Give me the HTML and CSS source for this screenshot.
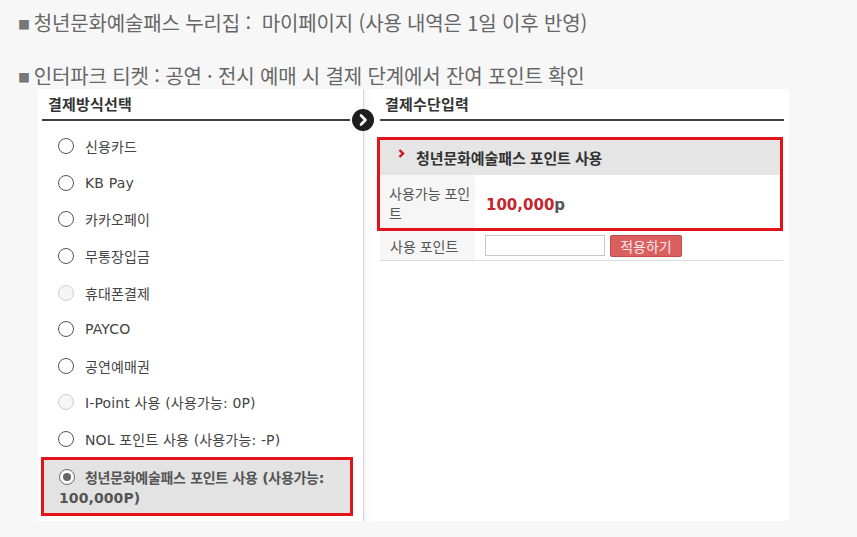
FILE: index.html
```html
<!DOCTYPE html>
<html lang="ko">
<head>
<meta charset="utf-8">
<link rel="stylesheet" href="styles.css">
</head>
<body>
<p class="intro intro-first"><span class="sq">■</span>청년문화예술패스 누리집 :&nbsp; 마이페이지 (사용 내역은 1일 이후 반영)</p>
<p class="intro intro-second"><span class="sq">■</span>인터파크 티켓 : 공연 · 전시 예매 시 결제 단계에서 잔여 포인트 확인</p>
<div class="panel">
  <div class="col-left">
    <h3 class="col-title">결제방식선택</h3>
    <ul class="methods">
      <li class="method"><span class="radio"></span>신용카드</li>
      <li class="method"><span class="radio"></span>KB Pay</li>
      <li class="method"><span class="radio"></span>카카오페이</li>
      <li class="method"><span class="radio"></span>무통장입금</li>
      <li class="method"><span class="radio radio-disabled"></span>휴대폰결제</li>
      <li class="method"><span class="radio"></span>PAYCO</li>
      <li class="method"><span class="radio"></span>공연예매권</li>
      <li class="method"><span class="radio radio-disabled"></span>I-Point 사용 (사용가능: 0P)</li>
      <li class="method"><span class="radio"></span>NOL 포인트 사용 (사용가능: -P)</li>
    </ul>
    <div class="selected-method"><span class="radio radio-checked"></span>청년문화예술패스 포인트 사용 (사용가능: <span class="sel-num">100,000P)</span></div>
  </div>
  <div class="col-right">
    <span class="arrow-badge"><svg width="22" height="22" viewBox="0 0 22 22"><circle cx="11" cy="11" r="11" fill="#1e1e1e"/><path d="M9 6.5 L13.5 11 L9 15.5" fill="none" stroke="#fff" stroke-width="2.6" stroke-linecap="round" stroke-linejoin="round"/></svg></span>
    <h3 class="col-title col-title-right">결제수단입력</h3>
    <div class="pass-box">
      <div class="pass-head"><svg class="chev" width="7" height="9" viewBox="0 0 7 9"><path d="M1.5 1 L5 4.5 L1.5 8" fill="none" stroke="#d0141c" stroke-width="2.4"/></svg>청년문화예술패스 포인트 사용</div>
      <div class="pass-row">
        <div class="row-label row-label-wrap">사용가능 포인트</div>
        <div class="row-value"><span class="amount">100,000</span><span class="unit">p</span></div>
      </div>
    </div>
    <div class="use-row">
      <div class="row-label">사용 포인트</div>
      <div class="row-value row-input">
        <input class="point-input" type="text">
        <button class="apply-btn" type="button">적용하기</button>
      </div>
    </div>
  </div>
</div>
</body>
</html>
```

FILE: styles.css
```css
* { box-sizing: border-box; }
html, body { margin: 0; padding: 0; }
body {
  background: #f7f7f7;
  font-family: "Noto Sans CJK KR", "Noto Sans", sans-serif;
  color: #444;
  width: 857px;
  height: 537px;
  overflow: hidden;
}
.intro {
  margin: 0;
  padding-left: 18px;
  height: 26px;
  box-sizing: content-box;
  font-size: 20px;
  line-height: 26px;
  color: #666;
  letter-spacing: -0.15px;
  white-space: nowrap;
  overflow: hidden;
}
.intro-first { padding-top: 10px; }
.intro-second { padding-top: 27px; }
.sq {
  font-size: 12px;
  line-height: 10px;
  color: #777;
  margin-right: 4px;
  vertical-align: 1px;
}
.panel {
  margin: 0 0 0 38px;
  width: 751px;
  height: 432px;
  background: #fff;
  display: grid;
  grid-template-columns: 325px 426px;
}
.col-left { padding: 0 13px 0 4px; }
.col-right {
  position: relative;
  border-left: 1px solid #d4d4d4;
  box-shadow: inset 6px 0 6px -4px rgba(0,0,0,0.06);
  padding: 0 5px 0 16px;
}
.col-title {
  margin: 0;
  height: 32px;
  padding: 6px 0 0 6px;
  font-size: 15px;
  line-height: 18px;
  font-weight: bold;
  color: #333;
  border-bottom: 2px solid #404040;
  letter-spacing: 0.2px;
}
.col-title-right { padding-left: 5px; }
.arrow-badge {
  position: absolute;
  left: -12px;
  top: 20px;
  width: 22px;
  height: 22px;
}
.arrow-badge svg { display: block; }
.methods {
  list-style: none;
  margin: 0;
  padding: 7px 0 0 0;
}
.method {
  height: 36.6px;
  display: flex;
  align-items: center;
  font-family: "DejaVu Sans", "Noto Sans CJK KR", sans-serif;
  font-size: 14px;
  color: #444;
  padding-left: 16px;
  letter-spacing: 0.15px;
}
.radio {
  display: inline-block;
  flex: none;
  width: 16px;
  height: 16px;
  border: 1.5px solid #555;
  border-radius: 50%;
  background: #fff;
  margin-right: 11px;
  position: relative;
}
.radio-disabled {
  border-color: #cfcfcf;
  background: #f6f6f6;
}
.radio-checked {
  border-color: #6a6a6a;
  vertical-align: -2px;
  margin-right: 10px;
}
.radio-checked::after {
  content: "";
  position: absolute;
  left: 2.5px;
  top: 2.5px;
  width: 8px;
  height: 8px;
  border-radius: 50%;
  background: #666;
}
.selected-method {
  margin-left: -1px;
  margin-right: -3px;
  border: 3px solid #e3131b;
  background: #e3e3e3;
  padding: 8px 6px 5px 15px;
  font-family: "DejaVu Sans", "Noto Sans CJK KR", sans-serif;
  font-size: 14px;
  line-height: 20px;
  font-weight: bold;
  color: #555;
  letter-spacing: -0.3px;
}
.sel-num { letter-spacing: 0.1px; }
.pass-box {
  margin: 16px 0 0 -3px;
  width: 406px;
  border: 3px solid #e3131b;
}
.pass-head {
  height: 35px;
  background: #e5e5e5;
  display: flex;
  align-items: center;
  padding-left: 18px;
  font-size: 15px;
  font-weight: bold;
  color: #333;
  letter-spacing: -0.1px;
}
.chev { margin-right: 11px; margin-top: -9px; }
.pass-row {
  display: flex;
  height: 53px;
}
.row-label {
  width: 95px;
  flex: none;
  background: #f6f6f6;
  font-size: 14px;
  color: #555;
  padding-left: 9px;
  display: flex;
  align-items: center;
}
.row-label-wrap {
  line-height: 20px;
  word-break: break-all;
  padding-right: 4px;
  padding-top: 2px;
}
.row-value {
  display: flex;
  align-items: center;
  padding-left: 11px;
  padding-top: 6px;
}
.amount {
  font-family: "DejaVu Sans", "Noto Sans", sans-serif;
  font-weight: bold;
  font-size: 15px;
  color: #c4262d;
}
.unit {
  font-family: "DejaVu Sans", "Noto Sans", sans-serif;
  font-weight: bold;
  font-size: 15px;
  color: #555;
}
.use-row {
  display: flex;
  height: 30px;
  border-bottom: 1px solid #ddd;
  width: 403px;
}
.use-row .row-label { padding-left: 10px; }
.row-input { padding-top: 0; padding-left: 10px; gap: 5px; }
.point-input {
  width: 120px;
  height: 21px;
  border: 1px solid #c8c8c8;
  background: #fff;
  margin: 0;
  padding: 0;
}
.apply-btn {
  width: 72px;
  height: 22px;
  border: 1px solid #c9474a;
  border-radius: 2px;
  background: #d9605f;
  color: #fbe9e9;
  font-family: "Noto Sans CJK KR", sans-serif;
  font-size: 14px;
  line-height: 18px;
  padding: 0;
  margin: 0;
}
```
